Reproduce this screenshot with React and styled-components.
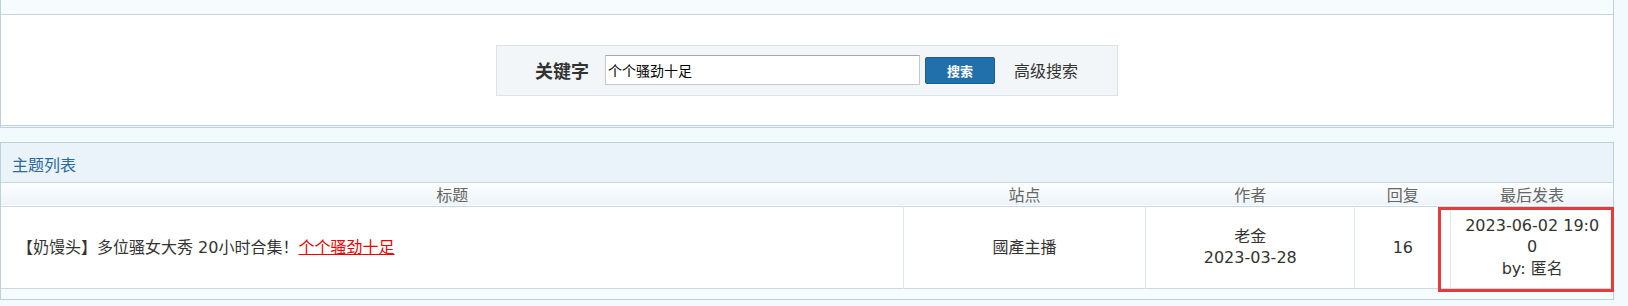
import React from 'react';
import styled, { createGlobalStyle } from 'styled-components';

const GlobalStyle = createGlobalStyle`
  html, body {
    margin: 0;
    padding: 0;
    background: #f3fafd;
  }
  body {
    font-family: "DejaVu Sans", "Noto Sans CJK SC", sans-serif;
    color: #333;
  }
`;

const Page = styled.div`
  width: 1614px;
  display: flex;
  flex-direction: column;
  gap: 14px;
`;

const SearchPanel = styled.section`
  border-left: 1px solid #bcd1dd;
  border-right: 1px solid #bcd1dd;
  border-bottom: 3px double #bcd1dd;
`;

const TopStrip = styled.div`
  height: 14px;
  background: #f6fbfe;
  border-bottom: 1px solid #c2d5e0;
`;

const SearchArea = styled.div`
  height: 110px;
  background: #fff;
  display: flex;
  align-items: center;
  justify-content: center;
`;

const SearchBox = styled.form`
  box-sizing: border-box;
  width: 622px;
  height: 51px;
  padding-left: 38px;
  display: flex;
  align-items: center;
  background: #f2f6f9;
  border: 1px solid #dae4ea;
`;

const Label = styled.span`
  font-family: "Noto Sans CJK SC", sans-serif;
  font-size: 18px;
  font-weight: bold;
  color: #333;
  margin-right: 16px;
`;

const KeywordInput = styled.input`
  box-sizing: border-box;
  width: 315px;
  height: 30px;
  padding: 0 2px;
  border: 1px solid #c9c9c9;
  border-top-color: #a9a9a9;
  font-family: "Noto Sans CJK SC", sans-serif;
  font-size: 14px;
  color: #000;
  background: #fff;
  outline: none;
`;

const SearchButton = styled.button`
  width: 70px;
  height: 27px;
  margin-left: 5px;
  border: 1px solid #1a5f94;
  border-radius: 2px;
  background: #2170ab;
  color: #fff;
  font-family: "Noto Sans CJK SC", sans-serif;
  font-size: 13px;
  font-weight: bold;
  padding: 0;
`;

const AdvancedLink = styled.a`
  margin-left: 19px;
  font-family: "Noto Sans CJK SC", sans-serif;
  font-size: 16px;
  color: #333;
  text-decoration: none;
`;

const ListPanel = styled.section`
  border: 1px solid #bcd1dd;
  background: #f6fbfd;
  padding-bottom: 10px;
`;

const ListHeader = styled.div`
  box-sizing: border-box;
  height: 40px;
  padding: 3px 0 0 11px;
  display: flex;
  align-items: center;
  background: #ebf3fa;
  border-bottom: 1px solid #c5d8e4;
  color: #2b6a9c;
  font-family: "Noto Sans CJK SC", sans-serif;
  font-size: 16px;
`;

const Table = styled.table`
  width: 100%;
  border-collapse: collapse;
  table-layout: fixed;
`;

const HeadRow = styled.tr`
  height: 23px;
  background: linear-gradient(#fdfeff, #edf4f9);
  border-bottom: 1px solid #c5d8e4;
`;

const Th = styled.th`
  padding: 0;
  font-weight: normal;
  font-family: "Noto Sans CJK SC", sans-serif;
  font-size: 16px;
  line-height: 22px;
  color: #666;
  text-align: center;
`;

const DataRow = styled.tr`
  height: 82px;
  background: #fff;
  border-bottom: 1px solid #c8d9e3;
`;

const Td = styled.td`
  padding: 0 ${({ $align }) => ($align === 'left' ? '16px' : '4px')};
  text-align: ${({ $align }) => $align || 'center'};
  border-left: ${({ $first }) => ($first ? 'none' : '1px solid #dde6eb')};
  font-size: 16px;
  line-height: 21px;
  color: #333;
  position: relative;
`;

const TitleLink = styled.a`
  color: #e00;
  text-decoration: underline;
`;

const LastPost = styled.div`
  width: 140px;
  margin: 0 auto;
  word-break: break-all;
  line-height: 21.5px;
`;

const Highlight = styled.div`
  position: absolute;
  left: -13px;
  right: -1px;
  top: 0;
  bottom: -4px;
  border: 3px solid #e53b3b;
  pointer-events: none;
`;

const columns = [902, 242, 209, 96, 162];

export default function App() {
  return (
    <>
      <GlobalStyle />
      <Page>
        <SearchPanel>
          <TopStrip />
          <SearchArea>
            <SearchBox onSubmit={(e) => e.preventDefault()}>
              <Label>关键字</Label>
              <KeywordInput defaultValue="个个骚劲十足" />
              <SearchButton type="submit">搜索</SearchButton>
              <AdvancedLink href="#">高级搜索</AdvancedLink>
            </SearchBox>
          </SearchArea>
        </SearchPanel>

        <ListPanel>
          <ListHeader>主题列表</ListHeader>
          <Table>
            <colgroup>
              {columns.map((w, i) => (
                <col key={i} style={{ width: w }} />
              ))}
            </colgroup>
            <thead>
              <HeadRow>
                <Th>标题</Th>
                <Th>站点</Th>
                <Th>作者</Th>
                <Th>回复</Th>
                <Th>最后发表</Th>
              </HeadRow>
            </thead>
            <tbody>
              <DataRow>
                <Td $first $align="left">
                  【奶馒头】多位骚女大秀 20小时合集！<TitleLink href="#">个个骚劲十足</TitleLink>
                </Td>
                <Td>國產主播</Td>
                <Td>
                  老金
                  <br />
                  2023-03-28
                </Td>
                <Td>16</Td>
                <Td>
                  <LastPost>
                    2023-06-02 19:00
                    <br />
                    by: 匿名
                  </LastPost>
                  <Highlight />
                </Td>
              </DataRow>
            </tbody>
          </Table>
        </ListPanel>
      </Page>
    </>
  );
}
